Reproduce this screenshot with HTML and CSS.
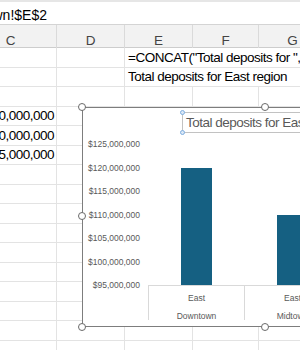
FILE: index.html
```html
<!DOCTYPE html>
<html>
<head>
<meta charset="utf-8">
<link rel="stylesheet" href="styles.css">
</head>
<body>
<div class="app">
  <div class="topstrip"></div>
  <div class="fxbar"><div class="fx"><span>=Downtown!$E$2</span></div></div>
  <div class="sheet">
    <div class="colheads">
      <div class="ch">C</div><div class="ch">D</div><div class="ch">E</div><div class="ch">F</div><div class="ch">G</div>
    </div>
    <div class="grid">
      <div class="cell"></div><div class="cell"></div><div class="cell wide">=CONCAT("Total deposits for ",'Downtown'!$A$2," region")</div>
      <div class="cell"></div><div class="cell"></div><div class="cell wide">Total deposits for East region</div>
      <div class="cell"></div><div class="cell"></div><div class="cell"></div><div class="cell"></div><div class="cell"></div>
      <div class="cell num">$120,000,000</div><div class="cell"></div><div class="cell"></div><div class="cell"></div><div class="cell"></div>
      <div class="cell num">$110,000,000</div><div class="cell"></div><div class="cell"></div><div class="cell"></div><div class="cell"></div>
      <div class="cell num">$115,000,000</div><div class="cell"></div><div class="cell"></div><div class="cell"></div><div class="cell"></div>
      <div class="cell"></div><div class="cell"></div><div class="cell"></div><div class="cell"></div><div class="cell"></div>
      <div class="cell"></div><div class="cell"></div><div class="cell"></div><div class="cell"></div><div class="cell"></div>
      <div class="cell"></div><div class="cell"></div><div class="cell"></div><div class="cell"></div><div class="cell"></div>
      <div class="cell"></div><div class="cell"></div><div class="cell"></div><div class="cell"></div><div class="cell"></div>
      <div class="cell"></div><div class="cell"></div><div class="cell"></div><div class="cell"></div><div class="cell"></div>
      <div class="cell"></div><div class="cell"></div><div class="cell"></div><div class="cell"></div><div class="cell"></div>
      <div class="cell"></div><div class="cell"></div><div class="cell"></div><div class="cell"></div><div class="cell"></div>
      <div class="cell"></div><div class="cell"></div><div class="cell"></div><div class="cell"></div><div class="cell"></div>
      <div class="cell"></div><div class="cell"></div><div class="cell"></div><div class="cell"></div><div class="cell"></div>
      <div class="cell"></div><div class="cell"></div><div class="cell"></div><div class="cell"></div><div class="cell"></div>
    </div>
  </div>

  <div class="chart">
    <div class="title-row">
      <div class="title">Total deposits for East region<i class="bh tl"></i><i class="bh bl"></i></div>
    </div>
    <div class="plot">
      <div class="yaxis">
        <span>$125,000,000</span><span>$120,000,000</span><span>$115,000,000</span><span>$110,000,000</span><span>$105,000,000</span><span>$100,000,000</span><span>$95,000,000</span>
      </div>
      <div class="cat"><div class="bar" style="height:117.5px"></div></div>
      <div class="cat"><div class="bar" style="height:70.5px"></div></div>
      <div class="cat"><div class="bar" style="height:94px"></div></div>
      <div class="spacer"></div>
      <div class="xlab"><span>East</span><span>Downtown</span></div>
      <div class="xlab"><span>East</span><span>Midtown</span></div>
      <div class="xlab"><span>East</span><span>Uptown</span></div>
    </div>
    <i class="hd h-tl"></i><i class="hd h-tm"></i><i class="hd h-ml"></i><i class="hd h-bl"></i><i class="hd h-bm"></i>
  </div>
</div>
</body>
</html>
```

FILE: styles.css
```css
* { box-sizing: border-box; margin: 0; padding: 0; }
html, body { width: 300px; height: 350px; overflow: hidden; background: #fff; }
body { font-family: "Liberation Sans", Arial, sans-serif; color: #000; }
.app { position: relative; width: 300px; height: 350px; overflow: hidden; }

.topstrip { height: 2px; background: #e6e6e6; }
.fxbar { height: 23px; border-bottom: 1px solid #d4d4d4; display: flex; align-items: center; padding-top: 4px; background: #fff; }
.fx { width: 47px; display: flex; justify-content: flex-end; font-size: 14px; white-space: nowrap; color: #000; }

.sheet { margin-left: -35px; width: 400px; }
.colheads { display: grid; grid-template-columns: 92px 68px 68px 66px 68px; height: 23px; background: #f2f2f2; border-bottom: 1px solid #cdcdcd; }
.ch { display: flex; align-items: center; justify-content: center; padding-top: 8px; border-right: 1px solid #dadada; font-size: 13.5px; color: #444; }

.grid { display: grid; grid-template-columns: 92px 68px 68px 66px 68px; grid-auto-rows: 19.5px; }
.cell { border-right: 1px solid #e3e3e3; border-bottom: 1px solid #e3e3e3; font-size: 13.5px; letter-spacing: -0.5px; display: flex; align-items: center; white-space: nowrap; padding: 0 3px; overflow: visible; }
.cell.num { justify-content: flex-end; padding-right: 2px; }
.cell.wide { grid-column: span 3; }

.chart { position: absolute; left: 82px; top: 107px; width: 367px; height: 220px; border: 1px solid #7d7d7d; background: #fff; display: flex; flex-direction: column; }
.title-row { display: flex; justify-content: center; margin-top: 4px; }
.title { position: relative; height: 21px; line-height: 19px; border: 1px solid #c2c2c2; padding: 0 3px; font-size: 13.5px; letter-spacing: -0.5px; color: #595959; white-space: nowrap; }
.bh { position: absolute; width: 5px; height: 5px; border-radius: 50%; background: #dbe8f6; border: 1px solid #7eaee0; left: -3px; }
.bh.tl { top: -3px; }
.bh.bl { bottom: -3px; }

.plot { margin-top: 11px; display: grid; grid-template-columns: 65px 96px 96px 96px; grid-template-rows: 141px 35px; }
.yaxis { margin: -5px 0; display: flex; flex-direction: column; justify-content: space-between; align-items: flex-end; padding-right: 8px; font-size: 8.5px; line-height: 10px; color: #595959; white-space: nowrap; }
.cat { display: flex; align-items: flex-end; justify-content: center; }
.bar { width: 31px; background: #156082; }
.xlab { border-top: 1px solid #d9d9d9; border-left: 1px solid #d9d9d9; display: flex; flex-direction: column; align-items: center; padding-top: 3px; font-size: 8.5px; line-height: 18px; color: #595959; white-space: nowrap; }

.hd { position: absolute; width: 8px; height: 8px; border-radius: 50%; background: #fff; border: 1.5px solid #6a6a6a; }
.h-tl { left: -5px; top: -5px; }
.h-tm { left: 178px; top: -5px; }
.h-ml { left: -5px; top: 104px; }
.h-bl { left: -5px; bottom: -5px; }
.h-bm { left: 178px; bottom: -5px; }
```
